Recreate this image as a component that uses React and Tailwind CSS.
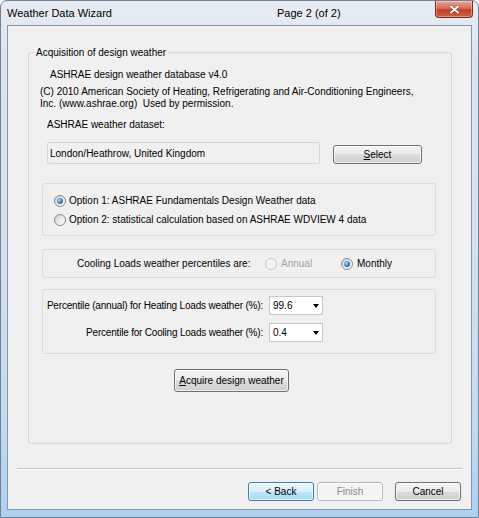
import React from "react";

function Radio({ checked = false, disabled = false }) {
  return (
    <span
      className={`flex h-[12px] w-[12px] shrink-0 items-center justify-center rounded-full border ${
        disabled
          ? "border-[#c8c8c8] bg-[#f4f4f4]"
          : "border-[#8b8b8b] bg-[linear-gradient(135deg,#cdcdcd_0%,#ececec_55%,#fafafa_100%)]"
      }`}
    >
      {checked && (
        <span className="h-[6px] w-[6px] rounded-full bg-[radial-gradient(circle_at_35%_35%,#a8dcf8_0%,#2d7fc0_55%,#0d4c8a_100%)]" />
      )}
    </span>
  );
}

function WinButton({ children, variant = "normal", className = "" }) {
  const look =
    variant === "focus"
      ? "border-[#3c7fb1] bg-[linear-gradient(180deg,#eaf6fd_0%,#d9f0fc_50%,#bee6fd_50%,#a7d9f5_100%)] text-black"
      : variant === "disabled"
      ? "border-[#b5b9bc] bg-[#f4f4f4] text-[#8a8a8a]"
      : "border-[#707070] bg-[linear-gradient(180deg,#f4f4f4_0%,#ebebeb_50%,#dddddd_50%,#cfcfcf_100%)] text-black";
  return (
    <div
      className={`flex items-center justify-center rounded-[3px] border shadow-[inset_0_0_0_1px_rgba(255,255,255,0.7)] text-[10px] leading-[12px] ${look} ${className}`}
    >
      {children}
    </div>
  );
}

function Combo({ value }) {
  return (
    <div className="ml-[6px] flex h-[19px] w-[54px] shrink-0 items-center justify-between border border-[#c5c8cc] bg-white pl-[3px] pr-[3px]">
      <span className="leading-[12px]">{value}</span>
      <span className="h-0 w-0 border-l-[3.5px] border-r-[3.5px] border-t-[4px] border-l-transparent border-r-transparent border-t-black" />
    </div>
  );
}

export default function App() {
  return (
    <div className="h-[518px] w-[479px] overflow-hidden font-['Liberation_Sans',Arial,sans-serif] text-[10px] text-black">
      <div className="flex h-full w-full flex-col rounded-t-[7px] border border-[#6f8296] bg-[linear-gradient(180deg,#e8edf2_0%,#dce5ee_10%,#d3e1ee_50%,#c2daef_82%,#aed0ef_100%)]">
        {/* caption */}
        <div className="flex h-[24px] items-start">
          <span className="ml-[6px] mt-[6px] w-[270px] text-[11px] leading-[13px]">Weather Data Wizard</span>
          <span className="mt-[6px] text-[11px] leading-[13px]">Page 2 (of 2)</span>
          <div className="ml-auto mr-[5px] flex h-[17px] w-[38px] items-center justify-center rounded-b-[4px] border border-t-0 border-[#7a2a1c] bg-[linear-gradient(180deg,#eaa594_0%,#d56f5a_45%,#c23f27_55%,#cc5f42_100%)] shadow-[inset_0_0_0_1px_rgba(255,255,255,0.35)]">
            <svg width="11" height="9" viewBox="0 0 11 9">
              <path d="M2 1.5 L9 7.5 M9 1.5 L2 7.5" stroke="#5a1b10" strokeWidth="3" strokeLinecap="round" opacity="0.5" />
              <path d="M2 1.5 L9 7.5 M9 1.5 L2 7.5" stroke="#ffffff" strokeWidth="2" strokeLinecap="round" />
            </svg>
          </div>
        </div>

        {/* client area */}
        <div className="ml-[6px] flex h-[485px] w-[465px] flex-col border border-[#8597ab] bg-[#f0f0f0]">
          <fieldset className="ml-[20px] mt-[20px] h-[398px] w-[424px] rounded-[3px] border border-[#d3d8dd]">
            <legend className="ml-[5px] px-[2px] leading-[13px]">Acquisition of design weather</legend>

            <p className="ml-[21px] mt-[10px] leading-[12px]">ASHRAE design weather database v4.0</p>
            <p className="ml-[11px] mt-[5px] leading-[12px]">
              (C) 2010 American Society of Heating, Refrigerating and Air-Conditioning Engineers,
              <br />
              Inc. (www.ashrae.org)&nbsp; Used by permission.
            </p>
            <p className="ml-[18px] mt-[9px] leading-[12px]">ASHRAE weather dataset:</p>

            <div className="ml-[18px] mt-[11px] flex items-end">
              <div className="flex h-[22px] w-[273px] items-center rounded-[2px] border border-[#d6d6d6] bg-[#f0f0f0] pl-[2px]">
                London/Heathrow, United Kingdom
              </div>
              <WinButton className="ml-[13px] h-[19px] w-[89px]">
                <span>
                  <span className="underline">S</span>elect
                </span>
              </WinButton>
            </div>

            {/* data source */}
            <div className="ml-[13px] mt-[19px] flex h-[53px] w-[394px] flex-col gap-[5px] rounded-[3px] border border-[#dcdcdc] pl-[11px] pt-[10px]">
              <label className="flex h-[14px] items-center gap-[3px]">
                <Radio checked />
                <span className="leading-[12px]">Option 1: ASHRAE Fundamentals Design Weather data</span>
              </label>
              <label className="flex h-[14px] items-center gap-[3px]">
                <Radio />
                <span className="leading-[12px]">Option 2: statistical calculation based on ASHRAE WDVIEW 4 data</span>
              </label>
            </div>

            {/* percentile basis */}
            <div className="ml-[13px] mt-[13px] flex h-[29px] w-[394px] items-center rounded-[3px] border border-[#dcdcdc] pl-[34px]">
              <span className="w-[188px] leading-[12px]">Cooling Loads weather percentiles are:</span>
              <label className="flex w-[76px] items-center gap-[4px] text-[#a3a3a3]">
                <Radio disabled />
                <span className="leading-[12px]">Annual</span>
              </label>
              <label className="flex items-center gap-[4px]">
                <Radio checked />
                <span className="leading-[12px]">Monthly</span>
              </label>
            </div>

            {/* percentiles */}
            <div className="ml-[13px] mt-[11px] flex h-[65px] w-[394px] flex-col gap-[8px] rounded-[3px] border border-[#dcdcdc] pt-[6px]">
              <div className="flex h-[19px] items-center">
                <span className="flex w-[220px] justify-end whitespace-nowrap leading-[12px] tracking-[-0.18px]">
                  Percentile (annual) for Heating Loads weather (%):
                </span>
                <Combo value="99.6" />
              </div>
              <div className="flex h-[19px] items-center">
                <span className="flex w-[220px] justify-end whitespace-nowrap leading-[12px] tracking-[-0.2px]">
                  Percentile for Cooling Loads weather (%):
                </span>
                <Combo value="0.4" />
              </div>
            </div>

            <WinButton className="ml-[145px] mt-[15px] h-[23px] w-[115px]">
              <span>
                <span className="underline">A</span>cquire design weather
              </span>
            </WinButton>
          </fieldset>

          <div className="ml-[9px] mt-[24px] h-[2px] w-[445px] border-t border-b border-t-[#c6c6c6] border-b-white" />

          <div className="ml-[240px] mt-[12px] flex">
            <WinButton variant="focus" className="h-[19px] w-[66px]">
              &lt; Back
            </WinButton>
            <WinButton variant="disabled" className="ml-[3px] h-[19px] w-[66px]">
              Finish
            </WinButton>
            <WinButton className="ml-[12px] h-[19px] w-[66px]">Cancel</WinButton>
          </div>
        </div>
      </div>
    </div>
  );
}
